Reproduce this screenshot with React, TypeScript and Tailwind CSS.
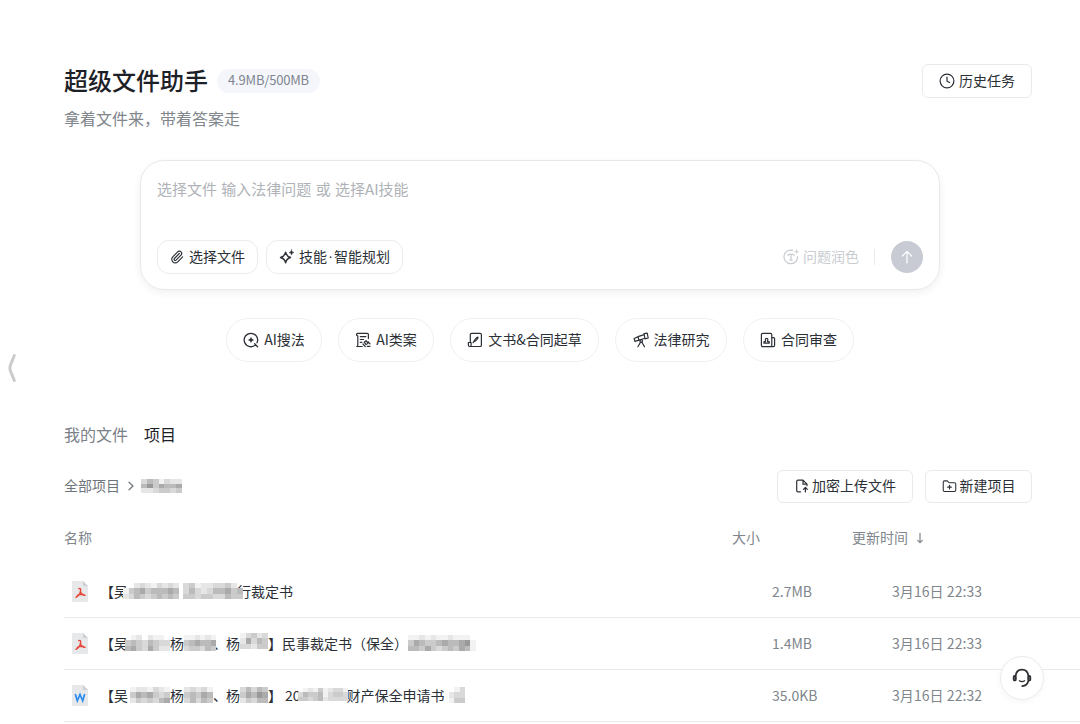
import type { ReactNode } from 'react';
import { FolderPlus, Paperclip } from 'lucide-react';

interface IconProps {
  className?: string;
  children: ReactNode;
}

function Icon({ className = 'w-4 h-4', children }: IconProps) {
  return (
    <svg
      viewBox="0 0 16 16"
      fill="none"
      stroke="currentColor"
      strokeWidth="1.2"
      strokeLinecap="round"
      strokeLinejoin="round"
      className={`shrink-0 ${className}`}
    >
      {children}
    </svg>
  );
}

const ClockIcon = () => (
  <Icon>
    <circle cx="8" cy="8" r="6.9" />
    <path d="M8 4v4.2l2.6 1.3" />
  </Icon>
);

const SparkIcon = () => (
  <Icon>
    <path d="M6.600 3.200c.7 3.400 1.700 4.500 4.900 5.300-3.200.8-4.200 1.900-4.900 5.300-.7-3.400-1.800-4.500-5.100-5.300 3.300-.8 4.400-1.900 5.100-5.300Z" strokeWidth="1.400" />
    <path
      d="M12.500.900c.4 1.700.8 2.200 2.500 2.600-1.700.4-2.100.9-2.500 2.600-.4-1.700-.8-2.200-2.500-2.600 1.700-.4 2.100-.9 2.500-2.600Z"
      fill="currentColor"
      strokeWidth=".5"
    />
  </Icon>
);

const PolishIcon = () => (
  <Icon>
    <path d="M9.800 1.400A6.800 6.800 0 1 0 14.600 7.500" />
    <path d="M5.200 6.600V5.300h5.600v1.300M8 5.300v5.800M6.800 11.100h2.400" />
    <path
      d="M13.600.8c.3 1.400.6 1.700 2 2-1.400.3-1.700.6-2 2-.3-1.400-.6-1.700-2-2 1.400-.3 1.700-.6 2-2Z"
      fill="currentColor"
      strokeWidth=".4"
    />
  </Icon>
);

const SearchLawIcon = () => (
  <Icon>
    <path d="M12.700 12.700A6.700 6.700 0 1 1 14 10.800M11.600 11.800l3 3" strokeWidth="1.300" />
    <path
      d="M8 4.400c.5 2.200 1.200 2.900 3.400 3.500-2.200.5-2.900 1.200-3.400 3.400-.5-2.200-1.200-2.900-3.400-3.400 2.200-.6 2.900-1.300 3.400-3.500Z"
      fill="currentColor"
      stroke="none"
    />
  </Icon>
);

const CaseIcon = () => (
  <Icon>
    <path d="M13.400 6.600V2.600c0-.8-.4-1.200-1.200-1.200H2.800c-.8 0-1.300.5-1.300 1.200 0 .9.500 1.300 1.300 1.300v9c0 1-.4 1.600-1.100 1.600h5.600" />
    <path d="M5.300 4.600h5.600M5.300 7.500h3.200M5.300 10.400h1.500" />
    <path d="m9.200 10.200 1.900-1.500 1.900 2.400-1.900 1.500zM8 12l2.300 2.600M13.300 9.800l1.700 2M12.300 14.300h2.700" />
  </Icon>
);

const DraftIcon = () => (
  <Icon>
    <path d="M3.300 10.500V2.700c0-.8.500-1.300 1.300-1.300h8.500c.8 0 1.300.5 1.300 1.300v10.500c0 .8-.5 1.300-1.300 1.300H2.600c-.7 0-1.200-.5-1.200-1.200v-2.800h2.700v2.700c0 .7-.5 1.300-1.200 1.300" />
    <path d="M6.800 9.700c0-1.300 2.700-4.300 4.200-4.500.4 1.400-2.700 4.300-4.200 4.500Zm0 0L6 10.600" />
  </Icon>
);

const ResearchIcon = () => (
  <Icon>
    <path d="m11 1.700 3.200-.5 1 4.800-3.200.8zM11.200 2.600 5 4.600l1 3.700 5.800-2M5 4.900l-3.900 1.600.8 2.900L6 8.200" />
    <circle cx="8.200" cy="9" r="1.300" />
    <path d="m7.500 10.200-2.600 4.500M8.900 10.200l2.600 4.500" />
  </Icon>
);

const ReviewIcon = () => (
  <Icon>
    <rect x="1.400" y="1.400" width="10.400" height="13.200" rx="1.300" />
    <path d="M12 5.600h1.500c.6 0 1.100.5 1.100 1.100v6.600c0 .7-.5 1.300-1.200 1.300H11" />
    <path d="M4 11.200h5.200V9.600H7.700c-.4-.7 0-1.300.2-2a1.300 1.300 0 1 0-2.600 0c.2.700.600 1.300.2 2H4z" />
  </Icon>
);

const UploadIcon = () => (
  <Icon>
    <path d="M6.500 13.800H4c-.8 0-1.300-.5-1.300-1.300v-9c0-.8.500-1.300 1.300-1.300h5l4 4v1.500M9 2.200v4h4" />
    <path d="M11.400 14V9.700M9.500 11.400l1.900-1.900 1.900 1.900" />
  </Icon>
);

const HeadsetIcon = () => (
  <svg viewBox="0 0 20 20" fill="none" stroke="#2b2d30" strokeWidth="1.600" strokeLinecap="round" className="w-5 h-5">
    <path d="M3.700 7.900C4 4 6.500 1.600 10 1.600S16 4 16.300 7.900M16.500 12.500c-.6 3.200-2.600 5.300-6.300 5.600" />
    <path d="M7.400 12.800c1.500.9 3.700.9 5.200 0" strokeWidth="1.300" />
    <rect x="1.600" y="7.900" width="2.300" height="4.600" rx="1.100" fill="#777a7e" />
    <rect x="16.100" y="7.900" width="2.300" height="4.600" rx="1.100" fill="#777a7e" />
  </svg>
);

function FileIcon({ type }: { type: 'pdf' | 'word' }) {
  return (
    <svg viewBox="0 0 16 21" className="w-4 h-[21px] shrink-0">
      <path d="M.7 0H11l5 5v15.300a.7.7 0 0 1-.7.7H.7a.7.7 0 0 1-.7-.7V.7A.7.7 0 0 1 .7 0Z" fill="#e6e8ea" />
      <path d="m11 0 5 5h-4.300a.7.7 0 0 1-.7-.7z" fill="#cdd0d3" />
      {type === 'pdf' ? (
        <path
          d="M6.800 7.700c1.500-.7 2.100.1 1.800 2-.4 2.600-2.200 5.500-4.700 6.600M8.600 10.800c.6 2 2 3.600 4.400 3.500M5.300 14.400c2-1 4-1.300 6.300-1"
          fill="none"
          stroke="#e8483b"
          strokeWidth="1.400"
          strokeLinecap="round"
        />
      ) : (
        <path d="m3.300 8.900 2 6.900L8 9.400l2.700 6.400 2-6.900" fill="none" stroke="#2b8df0" strokeWidth="1.700" />
      )}
    </svg>
  );
}

// Pixelated block that hides a name. Every string is a row, every digit a grey (0 = empty)
function Mosaic({ rows, className }: { rows: string[]; className: string }) {
  const tones = ['transparent', '#f2f2f2', '#e6e6e6', '#d9d9d9', '#cbcbcb', '#bbbbbb', '#aaaaaa', '#999999'];
  return (
    <svg
      viewBox={`0 0 ${rows[0].length} ${rows.length}`}
      preserveAspectRatio="none"
      shapeRendering="crispEdges"
      className={`relative shrink-0 ${className}`}
    >
      {rows.map((row, y) =>
        row.split('').map((tone, x) => (
          <rect key={`${x}-${y}`} x={x} y={y} width="1" height="1" fill={tones[Number(tone)]} />
        ))
      )}
    </svg>
  );
}

const SKILLS = [
  { label: 'AI搜法', icon: <SearchLawIcon />, width: 'w-24' },
  { label: 'AI类案', icon: <CaseIcon />, width: 'w-24' },
  { label: '文书&合同起草', icon: <DraftIcon />, width: 'w-[149px]' },
  { label: '法律研究', icon: <ResearchIcon />, width: 'w-28' },
  { label: '合同审查', icon: <ReviewIcon />, width: 'w-[111px]' },
];

interface FileRow {
  id: number;
  type: 'pdf' | 'word';
  size: string;
  time: string;
  name: ReactNode;
}

const FILES: FileRow[] = [
  {
    id: 1,
    type: 'pdf',
    size: '2.7MB',
    time: '3月16日 22:33',
    name: (
      <>
        <span>【吴</span>
        <Mosaic className="-ml-[5px] w-[56px] h-4" rows={['0023213232', '1456455565', '2354345454']} />
        <Mosaic className="ml-1 w-[60px] h-4 z-10" rows={['3412233420', '3532355645', '4434433544']} />
        <span className="-ml-[6px]">行裁定书</span>
      </>
    ),
  },
  {
    id: 2,
    type: 'pdf',
    size: '1.4MB',
    time: '3月16日 22:33',
    name: (
      <>
        <span>【吴</span>
        <Mosaic className="-ml-[3px] w-[45px] h-4 z-10" rows={['01202110', '45435433', '56436422']} />
        <span>杨</span>
        <Mosaic className="w-[32px] h-4" rows={['112121', '456556', '344354']} />
        <span className="-ml-[3px]">、</span>
        <span className="-ml-px">杨</span>
        <Mosaic className="w-[28px] h-4 -mt-1" rows={['13423', '26354', '33244']} />
        <span>】民事裁定书（保全）</span>
        <Mosaic className="w-[68px] h-4" rows={['112121121110', '465445655671', '554643454651']} />
      </>
    ),
  },
  {
    id: 3,
    type: 'word',
    size: '35.0KB',
    time: '3月16日 22:32',
    name: (
      <>
        <span>【吴</span>
        <Mosaic className="ml-[2px] w-[40px] h-4" rows={['1221321', '4656434', '2434356']} />
        <span>杨</span>
        <Mosaic className="w-[29px] h-4" rows={['23231', '45465', '35354']} />
        <span>、</span>
        <span className="-ml-px">杨</span>
        <Mosaic className="w-[28px] h-4" rows={['35354', '46576', '24355']} />
        <span>】</span>
        <span className="ml-[3px]">20</span>
        <Mosaic className="-ml-[3px] w-[50px] h-[13px] z-10" rows={['0121412331', '3544513443', '4434523333']} />
        <span className="-ml-px">财产保全申请书</span>
        <Mosaic className="ml-1 w-4 h-4" rows={['013', '233', '144']} />
      </>
    ),
  },
];

export default function App() {
  return (
    <div className="relative h-[724px] overflow-hidden bg-white pl-16 pt-16 text-sm text-[#2b2f36] font-['Noto_Sans_CJK_SC',sans-serif]">
      <header className="flex justify-between h-24 pr-12">
        <div>
          <div className="flex items-center h-[34px]">
            <h1 className="-mt-0.5 text-2xl font-medium text-[#1d2127] leading-8">超级文件助手</h1>
            <span className="ml-[9px] flex items-center justify-center w-[103px] h-6 pb-px rounded-full bg-[#f4f6fc] text-[13px] tracking-[-0.2px] text-[#80868f]">
              4.9MB/500MB
            </span>
          </div>
          <p className="mt-2 text-base leading-6 text-[#80868c]">拿着文件来，带着答案走</p>
        </div>
        <button className="flex items-center justify-center gap-1 w-[110px] h-[34px] rounded-md border border-[#e9eaec]">
          <ClockIcon />
          <span className="-mt-0.5">历史任务</span>
        </button>
      </header>

      {/* Prompt box */}
      <section className="ml-[76px] w-[800px] h-[130px] rounded-[24px] border border-[#e8e8ea] px-4 pt-4 pb-[15px] flex flex-col justify-between shadow-[0_3px_8px_rgba(0,0,0,0.06)]">
        <p className="text-[15px] leading-6 [word-spacing:1px] text-[#afb2b7]">选择文件 输入法律问题 或 选择AI技能</p>
        <div className="flex items-center justify-between">
          <div className="flex gap-2">
            <button className="flex items-center justify-center gap-[5px] w-[101px] h-[34px] rounded-xl border border-[#ebecee]">
              <Paperclip className="w-[14px] h-[14px]" strokeWidth={2} />
              <span className="-mt-0.5">选择文件</span>
            </button>
            <button className="flex items-center justify-center gap-1 w-[137px] h-[34px] rounded-xl border border-[#ebecee]">
              <SparkIcon />
              <span className="-mt-0.5 flex">
                技能
                <span className="w-[7px] text-center font-['Liberation_Sans',sans-serif]">·</span>
                智能规划
              </span>
            </button>
          </div>
          <div className="flex items-center text-[#c9ccd0]">
            <PolishIcon />
            <span className="ml-1 -mt-0.5">问题润色</span>
            <span className="ml-[15px] mr-4 w-px h-4 bg-[#e8eaed]" />
            <button className="flex items-center justify-center w-8 h-8 rounded-full bg-[#c8cbd3] text-white">
              <Icon>
                <path d="M8 14V2.600M3.400 7 8 2.400 12.600 7" />
              </Icon>
            </button>
          </div>
        </div>
      </section>

      {/* Skill shortcuts */}
      <div className="ml-[162px] mt-7 flex gap-4">
        {SKILLS.map((skill) => (
          <button
            key={skill.label}
            className={`flex items-center justify-center gap-[5px] h-11 rounded-full border border-[#eff0f1] ${skill.width}`}
          >
            {skill.icon}
            <span className="-mt-0.5">{skill.label}</span>
          </button>
        ))}
      </div>

      <nav className="mt-[60px] flex gap-4 text-base leading-6">
        <span className="text-[#7b8188]">我的文件</span>
        <span className="text-[#1d2127]">项目</span>
      </nav>

      <div className="mt-6 flex items-center justify-between h-8 pr-12">
        <div className="flex items-center text-[#6f757c]">
          <span className="-mt-0.5">全部项目</span>
          <Icon className="ml-[3px] w-4 h-4">
            <path d="M6 4.200 10 8l-4 3.800" />
          </Icon>
          <Mosaic className="ml-[2px] w-[41px] h-[14px]" rows={['3541322', '5746556', '2234434']} />
        </div>
        <div className="flex gap-3">
          <button className="flex items-center justify-center gap-[2px] w-[136px] h-[33px] rounded-md border border-[#e9eaec]">
            <UploadIcon />
            <span className="-mt-0.5">加密上传文件</span>
          </button>
          <button className="flex items-center justify-center gap-[3px] w-[107px] h-[33px] rounded-md border border-[#e9eaec]">
            <FolderPlus className="w-[15px] h-[15px]" strokeWidth={1.7} />
            <span className="-mt-0.5">新建项目</span>
          </button>
        </div>
      </div>

      <div className="mt-[25px] flex leading-5 text-[#80868c]">
        <span className="w-[668px]">名称</span>
        <span className="w-[120px]">大小</span>
        <span className="flex items-center gap-1">
          更新时间
          <Icon className="w-4 h-4 mt-px">
            <path d="M8 3.300v9.400M5.700 10.400 8 12.700l2.300-2.300" />
          </Icon>
        </span>
      </div>

      <div className="mt-[19px]">
        {FILES.map((file) => (
          <div key={file.id} className="flex items-center h-[52px] border-b border-[#ebebed] pl-2">
            <FileIcon type={file.type} />
            <div className="-mt-0.5 ml-3 w-[672px] flex items-center whitespace-nowrap">{file.name}</div>
            <span className="-mt-0.5 w-[120px] text-[#80868c]">{file.size}</span>
            <span className="-mt-0.5 tracking-[0.07px] text-[#80868c]">{file.time}</span>
          </div>
        ))}
      </div>

      {/* Sidebar handle */}
      <svg viewBox="0 0 10 30" className="absolute left-[7px] top-[353px] w-[10px] h-[30px]">
        <path d="M7.300 2.500 3.300 12.500Q2.500 15 3.300 17.500L7.300 27.500" fill="none" stroke="#cbcbcb" strokeWidth="3" strokeLinecap="round" />
      </svg>

      <button className="absolute left-[1000px] top-[656px] z-20 flex items-center justify-center w-11 h-11 rounded-full border border-[#ececee] bg-white shadow-[0_2px_6px_rgba(0,0,0,0.04)]">
        <HeadsetIcon />
      </button>
    </div>
  );
}
